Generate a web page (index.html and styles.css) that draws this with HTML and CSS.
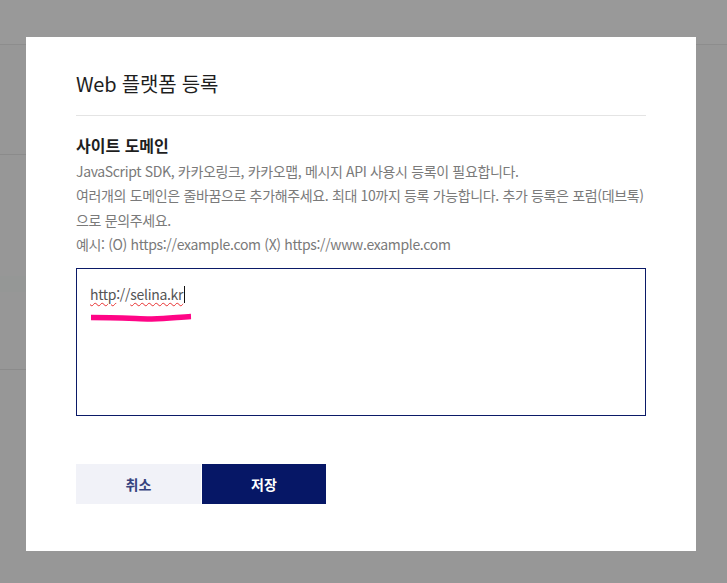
FILE: index.html
```html
<!DOCTYPE html>
<html lang="ko">
<head>
<meta charset="utf-8">
<title>Web 플랫폼 등록</title>
<link rel="stylesheet" href="styles.css">
</head>
<body>
<div class="page">
  <header class="page-header"></header>
  <div class="page-body">
    <div class="side">
      <div class="side-row r1"></div>
      <div class="side-row r2"></div>
      <div class="side-row r3"></div>
      <div class="side-row r4"></div>
    </div>
  </div>
</div>

<div class="overlay">
  <div class="modal">
    <h1 class="modal-title">Web 플랫폼 등록</h1>
    <div class="section">
      <h2 class="section-title">사이트 도메인</h2>
      <p class="desc">
        <span class="line">JavaScript SDK, 카카오링크, 카카오맵, 메시지 API 사용시 등록이 필요합니다.</span>
        <span class="line">여러개의 도메인은 줄바꿈으로 추가해주세요. 최대 10까지 등록 가능합니다. 추가 등록은 포럼(데브톡)</span>
        <span class="line">으로 문의주세요.</span>
        <span class="line">예시: (O) https://example.com (X) https://www.example.com</span>
      </p>
      <div class="field">
        <div class="field-text"><span class="typo">http</span>://<span class="typo">selina.kr</span><span class="caret"></span></div>
        <svg class="marker" width="106" height="10" viewBox="0 0 106 10">
          <path d="M3 5.5 C 25 5.5, 45 6.5, 62 7 C 80 7.2, 90 5, 103 4.5" fill="none" stroke="#ff0586" stroke-width="5.5" stroke-linecap="butt"/>
        </svg>
      </div>
    </div>
    <div class="actions">
      <button class="btn btn-cancel">취소</button>
      <button class="btn btn-save">저장</button>
    </div>
  </div>
</div>
</body>
</html>
```
FILE: styles.css
```css
* { box-sizing: border-box; }
html, body { margin: 0; padding: 0; }
body {
  width: 727px;
  height: 583px;
  overflow: hidden;
  background: #979797;
  font-family: "Noto Sans CJK KR", "Noto Sans", sans-serif;
}
.page { height: 583px; display: flex; flex-direction: column; }
.page-header {
  height: 45px;
  background: #999999;
  border-bottom: 1px solid #8d8d8d;
}
.page-body { flex: 1; display: flex; }
.side { width: 30px; display: flex; flex-direction: column; }
.side-row { border-bottom: 1px solid #8b8b8b; }
.side-row.r1 { height: 110px; }
.side-row.r2 { height: 121px; border-bottom: none; }
.side-row.r3 { height: 16px; background: #959796; border-bottom: none; }
.side-row.r4 { height: 78px; }

.overlay {
  position: fixed;
  inset: 0;
  display: block;
}
.modal {
  position: absolute;
  left: 26px;
  top: 37px;
  width: 670px;
  height: 514px;
  background: #ffffff;
  padding: 0 50px;
  display: flex;
  flex-direction: column;
}
.modal-title {
  margin: 32px 0 0;
  font-size: 20px;
  font-weight: 400;
  line-height: 30px;
  color: #1e1e1e;
  padding-bottom: 16px;
  border-bottom: 1px solid #e4e4e4;
  letter-spacing: -0.2px;
}
.section { padding-top: 17px; }
.section-title {
  margin: 0;
  font-size: 16px;
  font-weight: 700;
  line-height: 24px;
  color: #1e1e1e;
}
.desc {
  margin: 2px 0 0;
  font-size: 14px;
  line-height: 24.3px;
  color: #7a7a7a;
  letter-spacing: -0.35px;
}
.desc .line { display: block; white-space: nowrap; }
.field {
  position: relative;
  margin-top: 12px;
  height: 148px;
  border: 1px solid #0b1a67;
  padding: 14px 13px;
}
.field-text {
  font-size: 14px;
  line-height: 22px;
  color: #555555;
  display: flex;
  align-items: center;
  letter-spacing: -0.3px;
}
.typo {
  text-decoration: underline wavy #e83030;
  text-decoration-thickness: 1px;
  text-underline-offset: 2px;
}
.caret {
  display: inline-block;
  width: 1px;
  height: 17px;
  background: #111;
  margin-left: 1px;
}
.marker {
  position: absolute;
  left: 11px;
  top: 43px;
}
.actions {
  margin-top: 48px;
  display: flex;
  gap: 1px;
}
.btn {
  width: 125px;
  height: 40px;
  border: none;
  font-family: "Noto Sans CJK KR", "Noto Sans", sans-serif;
  font-size: 14px;
  font-weight: 700;
  padding: 0;
}
.btn-cancel { background: #f1f2f8; color: #36427e; }
.btn-save { background: #061766; color: #ffffff; width: 124px; }
```
